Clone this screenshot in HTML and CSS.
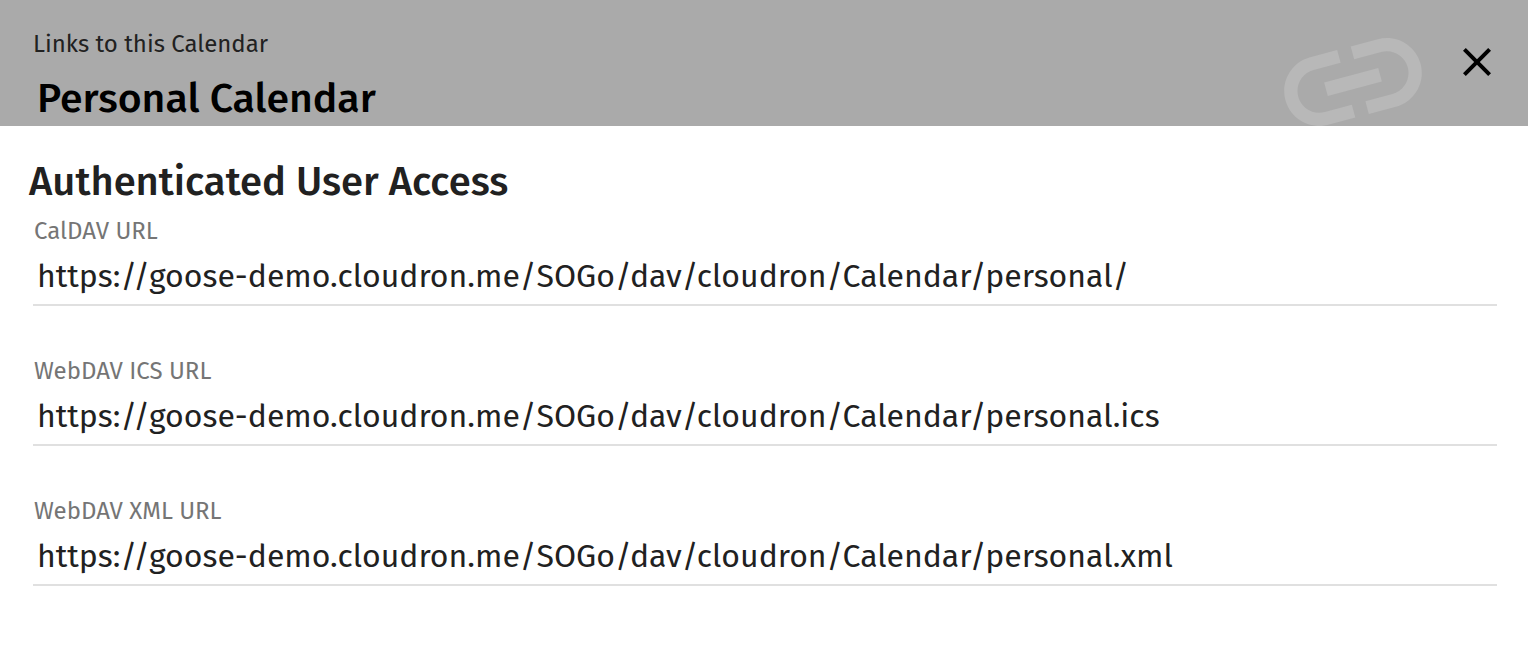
FILE: index.html
```html
<!DOCTYPE html>
<html lang="en">
<head>
<meta charset="utf-8">
<title>Links to this Calendar</title>
<link rel="stylesheet" href="styles.css">
</head>
<body>
<main class="dialog">
  <header class="toolbar">
    <div class="heading">
      <p class="eyebrow">Links to this Calendar</p>
      <h1 class="title">Personal Calendar</h1>
    </div>
    <svg class="link-icon" viewBox="0 0 24 24" aria-hidden="true"><path transform="rotate(-15 12 12)" d="M3.9 12c0-1.710 1.390-3.100 3.100-3.100h4V7H7c-2.760 0-5 2.240-5 5s2.240 5 5 5h4v-1.900H7c-1.710 0-3.100-1.390-3.100-3.100zM8 13h8v-2H8v2zm9-6h-4v1.900h4c1.710 0 3.100 1.390 3.100 3.100s-1.390 3.100-3.100 3.100h-4V17h4c2.760 0 5-2.240 5-5s-2.240-5-5-5z"/></svg>
    <button class="close" type="button" aria-label="Close">
      <svg class="close-icon" viewBox="0 0 24 24" aria-hidden="true"><path d="M19 6.410L17.590 5 12 10.590 6.410 5 5 6.410 10.590 12 5 17.590 6.410 19 12 13.410 17.590 19 19 17.590 13.410 12z"/></svg>
    </button>
  </header>
  <section class="content">
    <h2 class="section-title">Authenticated User Access</h2>
    <div class="field">
      <label class="label" for="caldav">CalDAV URL</label>
      <input class="input" id="caldav" type="text" readonly value="https://goose-demo.cloudron.me/SOGo/dav/cloudron/Calendar/personal/">
    </div>
    <div class="field">
      <label class="label" for="ics">WebDAV ICS URL</label>
      <input class="input" id="ics" type="text" readonly value="https://goose-demo.cloudron.me/SOGo/dav/cloudron/Calendar/personal.ics">
    </div>
    <div class="field">
      <label class="label" for="xml">WebDAV XML URL</label>
      <input class="input" id="xml" type="text" readonly value="https://goose-demo.cloudron.me/SOGo/dav/cloudron/Calendar/personal.xml">
    </div>
  </section>
</main>
</body>
</html>
```
FILE: styles.css
```css
* { box-sizing: border-box; }
body {
  margin: 0;
  background: #fff;
  color: #212121;
  font-family: "Fira Sans", "Noto Sans", sans-serif;
}
.toolbar {
  display: flex;
  align-items: flex-start;
  height: 126px;
  padding: 0 27px 0 33px;
  overflow: hidden;
  background: #aaa;
}
.heading { flex: 1; padding-top: 28px; }
.eyebrow { margin: 0; font-size: 24px; line-height: 32px; }
.title {
  margin: 15px 0 0 4px;
  color: #000;
  font-size: 41px;
  font-weight: 500;
  line-height: 48px;
}
.link-icon {
  flex: none;
  width: 168px;
  height: 168px;
  margin: -2px 16px 0 0;
  fill: #b8b8b8;
}
.close {
  flex: none;
  width: 48px;
  height: 48px;
  margin-top: 38px;
  padding: 0;
  border: 0;
  background: none;
}
.close-icon { display: block; width: 48px; height: 48px; }
.content { padding: 32px 31px 32px 33px; }
.section-title {
  margin: 0 0 0 -4px;
  font-size: 40px;
  font-weight: 500;
  line-height: 48px;
}
.field { margin-bottom: 40px; padding-top: 10px; }
.label {
  display: block;
  padding-left: 1px;
  color: #757575;
  font-size: 24px;
  line-height: 30px;
}
.input {
  display: block;
  width: 100%;
  height: 60px;
  padding: 2px 4px 0;
  border: 0;
  border-bottom: 2px solid #e0e0e0;
  background: none;
  color: #212121;
  font-family: inherit;
  font-size: 32px;
  outline: none;
}
```
